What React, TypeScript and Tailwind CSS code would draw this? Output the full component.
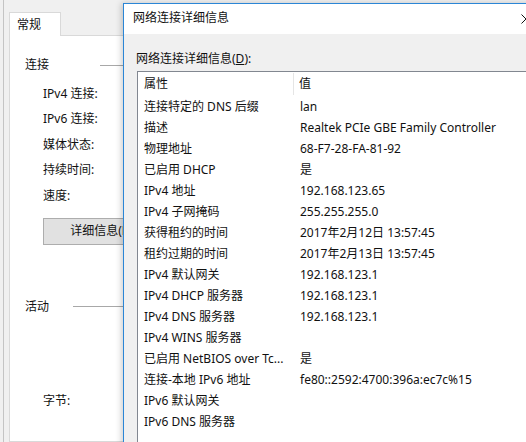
import React from "react";

const rows: [string, string][] = [
  ["连接特定的 DNS 后缀", "lan"],
  ["描述", "Realtek PCIe GBE Family Controller"],
  ["物理地址", "68-F7-28-FA-81-92"],
  ["已启用 DHCP", "是"],
  ["IPv4 地址", "192.168.123.65"],
  ["IPv4 子网掩码", "255.255.255.0"],
  ["获得租约的时间", "2017年2月12日 13:57:45"],
  ["租约过期的时间", "2017年2月13日 13:57:45"],
  ["IPv4 默认网关", "192.168.123.1"],
  ["IPv4 DHCP 服务器", "192.168.123.1"],
  ["IPv4 DNS 服务器", "192.168.123.1"],
  ["IPv4 WINS 服务器", ""],
  ["已启用 NetBIOS over Tc...", "是"],
  ["连接-本地 IPv6 地址", "fe80::2592:4700:396a:ec7c%15"],
  ["IPv6 默认网关", ""],
  ["IPv6 DNS 服务器", ""],
];

export default function App() {
  return (
    <div
      className="relative w-[526px] h-[442px] overflow-hidden bg-[#f0f0f0] text-[12px] text-[#111]"
      style={{ fontFamily: '"Noto Sans", "Noto Sans CJK SC", sans-serif' }}
    >
      {/* Back window */}
      <div className="flex h-full pl-[3px]">
        <div className="w-px bg-[#c4c4c4]" />
        <div className="flex-1 flex flex-col pl-[5px]">
          <div className="h-[36px] flex items-end">
            <div className="relative z-10 h-[24px] w-[52px] bg-white border border-b-0 border-[#d9d9d9] pl-[7px] flex items-center leading-none">
              常规
            </div>
          </div>
          <div className="flex-1 -mt-px bg-white border border-[#d9d9d9] flex flex-col">
            <div className="mt-[19px] h-[20px] flex items-center pl-[15px]">
              <span>连接</span>
              <div className="ml-[51px] flex-1 h-px bg-[#a8a8a8]" />
            </div>
            <div className="mt-[6px] flex flex-col pl-[33px]">
              <div className="h-[25.5px] flex items-center">IPv4 连接:</div>
              <div className="h-[25.5px] flex items-center">IPv6 连接:</div>
              <div className="h-[25.5px] flex items-center">媒体状态:</div>
              <div className="h-[25.5px] flex items-center">持续时间:</div>
              <div className="h-[25.5px] flex items-center">速度:</div>
            </div>
            <div className="mt-[9px] ml-[33px] w-[126px] h-[27px] bg-[#e1e1e1] border border-[#adadad] flex items-center justify-center">
              详细信息(E)...
            </div>
            <div className="mt-[52px] h-[20px] flex items-center pl-[15px]">
              <span>活动</span>
              <div className="ml-[24px] flex-1 h-px bg-[#a8a8a8]" />
            </div>
            <div className="mt-[74px] h-[20px] flex items-center pl-[33px]">字节:</div>
          </div>
        </div>
      </div>

      {/* Front dialog */}
      <div className="absolute left-[123px] top-[3px] w-[427px] h-[470px] border border-[#2b86d6] bg-[#f0f0f0] flex flex-col shadow-[-2px_0_6px_rgba(0,0,0,0.18)]">
        <div className="h-[30px] bg-white flex items-center justify-between pl-[9px]">
          <span className="leading-none -mt-[2px]">网络连接详细信息</span>
          <div className="w-[46px] h-[30px] flex items-center justify-center">
            <svg width="10" height="10" viewBox="0 0 10 10">
              <path d="M0.5 0.5 L9.5 9.5 M9.5 0.5 L0.5 9.5" stroke="#111" strokeWidth="1" />
            </svg>
          </div>
        </div>
        <div className="flex-1 flex flex-col pt-[17px]">
          <div className="pl-[12px] h-[16px] flex items-center leading-none">
            网络连接详细信息(<span className="underline">D</span>):
          </div>
          <div className="mt-[4px] ml-[13px] flex-1 bg-white border border-[#828790] flex flex-col">
            <div className="h-[24px] flex">
              <div className="w-[156px] flex items-center pl-[6px] border-r border-[#e5e5e5] my-px">属性</div>
              <div className="flex items-center pl-[5px]">值</div>
            </div>
            {rows.map(([k, v], i) => (
              <div key={i} className="h-[21px] flex items-center">
                <div className="w-[157px] pl-[6px] whitespace-nowrap overflow-hidden">{k}</div>
                <div className="pl-[5px] whitespace-nowrap">{v}</div>
              </div>
            ))}
          </div>
        </div>
      </div>
    </div>
  );
}
